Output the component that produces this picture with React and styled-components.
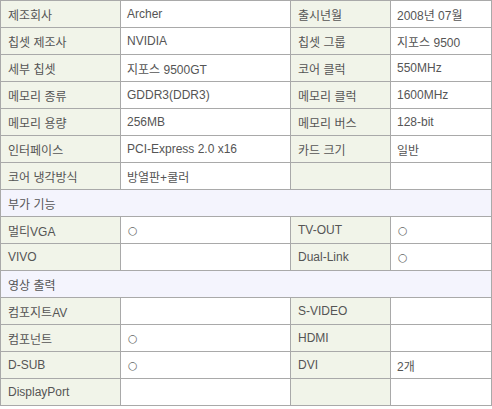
import React from "react";
import styled, { createGlobalStyle } from "styled-components";

const Global = createGlobalStyle`
  html, body { margin: 0; padding: 0; background: #ffffff; }
  body { font-family: "Liberation Sans", "Noto Sans CJK KR", sans-serif; }
`;

const Table = styled.div`
  display: grid;
  grid-template-columns: 119px 169px 99px 100px;
  grid-auto-rows: 26px;
  gap: 1px;
  padding: 1px;
  width: 490px;
  background: #a9a9a9;
  font-size: 12px;
  color: #555555;
`;

const Cell = styled.div`
  display: flex;
  align-items: center;
  padding-left: ${(p) => (p.$label ? "7px" : "6px")};
  background: ${(p) => (p.$label ? "#f1f4e9" : "#ffffff")};
  white-space: nowrap;
  overflow: hidden;
  font-family: "Liberation Sans", "Noto Sans CJK KR", sans-serif;
`;

const Section = styled.div`
  grid-column: 1 / -1;
  display: flex;
  align-items: center;
  padding-left: 7px;
  background: #f4f4fd;
`;

const Mark = styled.span`
  font-family: "DejaVu Sans", sans-serif;
  font-size: 11px;
  color: #666666;
  padding-left: 1px;
`;

const rows = [
  ["제조회사", "Archer", "출시년월", "2008년 07월"],
  ["칩셋 제조사", "NVIDIA", "칩셋 그룹", "지포스 9500"],
  ["세부 칩셋", "지포스 9500GT", "코어 클럭", "550MHz"],
  ["메모리 종류", "GDDR3(DDR3)", "메모리 클럭", "1600MHz"],
  ["메모리 용량", "256MB", "메모리 버스", "128-bit"],
  ["인터페이스", "PCI-Express 2.0 x16", "카드 크기", "일반"],
  ["코어 냉각방식", "방열판+쿨러", "", ""],
  { section: "부가 기능" },
  ["멀티VGA", "O", "TV-OUT", "O"],
  ["VIVO", "", "Dual-Link", "O"],
  { section: "영상 출력" },
  ["컴포지트AV", "", "S-VIDEO", ""],
  ["컴포넌트", "O", "HDMI", ""],
  ["D-SUB", "O", "DVI", "2개"],
  ["DisplayPort", "", "", ""],
];

const Value = ({ v }) => (v === "O" ? <Mark>○</Mark> : v);

export default function App() {
  return (
    <>
      <Global />
      <Table>
        {rows.map((r, i) =>
          r.section ? (
            <Section key={i}>{r.section}</Section>
          ) : (
            <React.Fragment key={i}>
              <Cell $label>{r[0]}</Cell>
              <Cell><Value v={r[1]} /></Cell>
              <Cell $label>{r[2]}</Cell>
              <Cell><Value v={r[3]} /></Cell>
            </React.Fragment>
          )
        )}
      </Table>
    </>
  );
}
